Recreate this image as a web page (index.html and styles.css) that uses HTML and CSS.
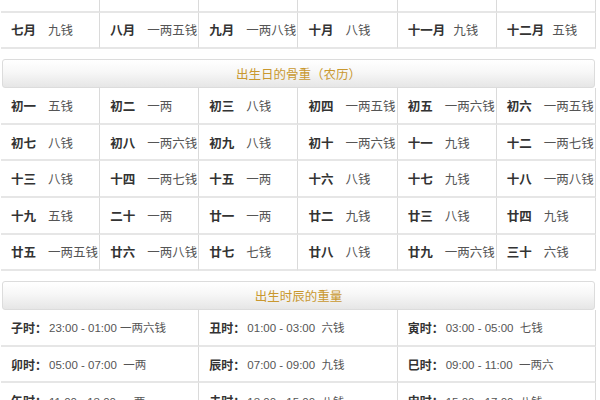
FILE: index.html
```html
<!DOCTYPE html>
<html lang="zh-CN">
<head>
<meta charset="utf-8">
<title>称骨重量表</title>
<link rel="stylesheet" href="styles.css">
</head>
<body>
<div class="page">
  <div class="grid g6 months">
    <div class="cell"><b>正月</b><span>六钱</span></div>
    <div class="cell"><b>二月</b><span>七钱</span></div>
    <div class="cell"><b>三月</b><span>一两八钱</span></div>
    <div class="cell"><b>四月</b><span>九钱</span></div>
    <div class="cell"><b>五月</b><span>五钱</span></div>
    <div class="cell"><b>六月</b><span>一两六钱</span></div>
    <div class="cell"><b>七月</b><span>九钱</span></div>
    <div class="cell"><b>八月</b><span>一两五钱</span></div>
    <div class="cell"><b>九月</b><span>一两八钱</span></div>
    <div class="cell"><b>十月</b><span>八钱</span></div>
    <div class="cell"><b>十一月</b><span class="tight">九钱</span></div>
    <div class="cell"><b>十二月</b><span class="tight">五钱</span></div>
  </div>

  <div class="head">出生日的骨重（农历）</div>
  <div class="grid g6">
    <div class="cell"><b>初一</b><span>五钱</span></div>
    <div class="cell"><b>初二</b><span>一两</span></div>
    <div class="cell"><b>初三</b><span>八钱</span></div>
    <div class="cell"><b>初四</b><span>一两五钱</span></div>
    <div class="cell"><b>初五</b><span>一两六钱</span></div>
    <div class="cell"><b>初六</b><span>一两五钱</span></div>
    <div class="cell"><b>初七</b><span>八钱</span></div>
    <div class="cell"><b>初八</b><span>一两六钱</span></div>
    <div class="cell"><b>初九</b><span>八钱</span></div>
    <div class="cell"><b>初十</b><span>一两六钱</span></div>
    <div class="cell"><b>十一</b><span>九钱</span></div>
    <div class="cell"><b>十二</b><span>一两七钱</span></div>
    <div class="cell"><b>十三</b><span>八钱</span></div>
    <div class="cell"><b>十四</b><span>一两七钱</span></div>
    <div class="cell"><b>十五</b><span>一两</span></div>
    <div class="cell"><b>十六</b><span>八钱</span></div>
    <div class="cell"><b>十七</b><span>九钱</span></div>
    <div class="cell"><b>十八</b><span>一两八钱</span></div>
    <div class="cell"><b>十九</b><span>五钱</span></div>
    <div class="cell"><b>二十</b><span>一两</span></div>
    <div class="cell"><b>廿一</b><span>一两</span></div>
    <div class="cell"><b>廿二</b><span>九钱</span></div>
    <div class="cell"><b>廿三</b><span>八钱</span></div>
    <div class="cell"><b>廿四</b><span>九钱</span></div>
    <div class="cell"><b>廿五</b><span>一两五钱</span></div>
    <div class="cell"><b>廿六</b><span>一两八钱</span></div>
    <div class="cell"><b>廿七</b><span>七钱</span></div>
    <div class="cell"><b>廿八</b><span>八钱</span></div>
    <div class="cell"><b>廿九</b><span>一两六钱</span></div>
    <div class="cell"><b>三十</b><span>六钱</span></div>
  </div>

  <div class="head">出生时辰的重量</div>
  <div class="grid g3 hours">
    <div class="cell"><b>子时：</b><span>23:00 - 01:00 一两六钱</span></div>
    <div class="cell"><b>丑时：</b><span>01:00 - 03:00&nbsp; 六钱</span></div>
    <div class="cell"><b>寅时：</b><span>03:00 - 05:00&nbsp; 七钱</span></div>
    <div class="cell"><b>卯时：</b><span>05:00 - 07:00&nbsp; 一两</span></div>
    <div class="cell"><b>辰时：</b><span>07:00 - 09:00&nbsp; 九钱</span></div>
    <div class="cell"><b>巳时：</b><span>09:00 - 11:00&nbsp; 一两六</span></div>
    <div class="cell"><b>午时：</b><span>11:00 - 13:00&nbsp; 一两</span></div>
    <div class="cell"><b>未时：</b><span>13:00 - 15:00&nbsp; 八钱</span></div>
    <div class="cell"><b>申时：</b><span>15:00 - 17:00&nbsp; 八钱</span></div>
  </div>
</div>
</body>
</html>
```

FILE: styles.css
```css
html, body {
  margin: 0;
  padding: 0;
  background: #ffffff;
  overflow: hidden;
}

body {
  font-family: "Liberation Sans", "Noto Sans CJK SC", sans-serif;
  color: #555555;
}

.page {
  margin: -24px 4px 0 1px;
  display: flex;
  flex-direction: column;
}

.grid {
  display: grid;
}

.g6 {
  grid-template-columns: repeat(6, 1fr);
}

.g3 {
  grid-template-columns: repeat(3, 1fr);
}

.cell {
  height: 34.6px;
  display: flex;
  align-items: center;
  padding-left: 10px;
  border-right: 1px solid #dadada;
  border-bottom: 2px solid #e6e6e6;
  font-size: 12.5px;
  white-space: nowrap;
  overflow: hidden;
}

.cell b {
  color: #333333;
  font-weight: bold;
  margin-right: 12px;
}

.cell span {
  color: #555555;
}

.cell span.tight {
  margin-left: -4px;
}

.hours .cell {
  font-size: 12px;
}

.hours .cell b {
  margin-right: 2px;
}

.hours .cell span {
  font-size: 11.5px;
}

.head {
  margin: 10px 1px 0 1px;
  height: 27px;
  border: 1px solid #dcdcdc;
  border-radius: 3px;
  background: linear-gradient(#ffffff 0%, #f7f7f7 45%, #e6e6e6 100%);
  color: #c9982f;
  font-size: 12.5px;
  display: flex;
  align-items: center;
  justify-content: center;
}
```
